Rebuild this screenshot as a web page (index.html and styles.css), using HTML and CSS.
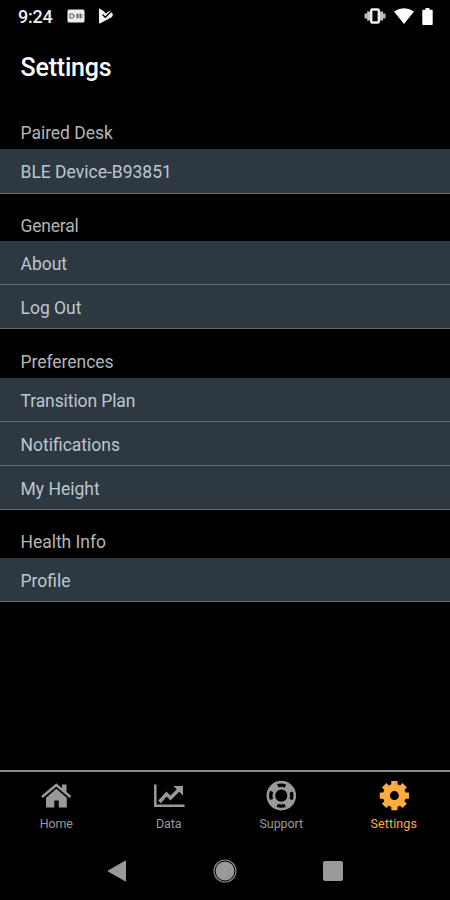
FILE: index.html
```html
<!DOCTYPE html>
<html lang="en">
<head>
<meta charset="utf-8">
<title>Settings</title>
<link rel="stylesheet" href="styles.css">
</head>
<body>
<div class="screen">
  <header class="status">
    <span class="clock">9:24</span>
    <svg class="card" width="18" height="14" viewBox="0 0 18 14"><rect x=".5" y=".5" width="17" height="13" rx="1.5" fill="#eee"/><g fill="none" stroke="#666" stroke-width="1.1"><path d="M3 5h2.500l2 2-2 2H3zM10.500 4.500v5M13.500 4.500v5M9 6h6.500M9 8h6.500"/></g></svg>
    <svg class="play" width="16" height="16" viewBox="0 0 16 16"><path d="M1 .3 5.500 3 8 5.500 12 2.500 15 6.500 14 9 2 15.500 1 15z" fill="#f2f2f2"/><path d="m4.500 6.500 2.800 2.800 6-6" fill="none" stroke="#000" stroke-width="1.300"/></svg>
    <div class="system">
      <svg width="22" height="18" viewBox="0 0 22 18"><rect x="7.200" y="2.500" width="7.600" height="13" rx="1" fill="none" stroke="#eee" stroke-width="2.400"/><path d="M4.500 4.500v9M17.500 4.500v9" stroke="#ccc" stroke-width="2.800"/><path d="M1.800 6.500v5M20.200 6.500v5" stroke="#bbb" stroke-width="2.600"/></svg>
      <svg class="wifi" width="20" height="16" viewBox="0 0 20 16"><path d="M0 3.500Q10-3 20 3.500L10 16z" fill="#fff"/></svg>
      <svg class="battery" width="11" height="17" viewBox="0 0 11 17"><path d="M3.500 0h4v1.700H10q.700 0 .700.700V16q0 1-.7 1H1q-.7 0-.7-1V2.400q0-.7.7-.7h2.500z" fill="#fff"/></svg>
    </div>
  </header>
  <h1 class="title">Settings</h1>
  <main class="content">
    <section class="paired"><h2>Paired Desk</h2><ul><li>BLE Device-B93851</li></ul></section>
    <section class="general"><h2>General</h2><ul><li>About</li><li>Log Out</li></ul></section>
    <section class="preferences"><h2>Preferences</h2><ul><li class="plan">Transition Plan</li><li>Notifications</li><li>My Height</li></ul></section>
    <section class="health"><h2>Health Info</h2><ul><li>Profile</li></ul></section>
  </main>
  <nav class="tabs">
    <a class="tab"><svg width="32" height="32" viewBox="0 0 32 32" fill="#999"><path d="M16.300 8.800 26.800 17.700v9.800h-8v-7h-4.500v7h-8.300V17.700z"/><path d="m2 17 14.300-12 14.200 12" fill="none" stroke="#000" stroke-width="4.200"/><path d="M22 4.500h4.500v9.500L22 10z"/><path d="m2 17 14.300-12 14.200 12" fill="none" stroke="#999" stroke-width="2.500"/></svg><span>Home</span></a>
    <a class="tab"><svg width="32" height="32" viewBox="0 0 32 32" fill="none" stroke="#999"><path d="M2.300 4.500v21.200H31.500" stroke-width="2.500"/><path d="m6.500 22 7-8 4 4L27 8.500" stroke-width="3.500"/><path d="M20.500 6H30v9.500z" fill="#999" stroke="none"/></svg><span>Data</span></a>
    <a class="tab"><svg width="32" height="32" viewBox="0 0 32 32" fill="none" stroke="#999"><circle cx="16.300" cy="15.600" r="13.500" stroke-width="2.600"/><circle cx="16.300" cy="15.600" r="7.500" stroke-width="2.800"/><circle cx="16.300" cy="15.600" r="10.500" stroke-width="5" stroke-dasharray="8.500 7.993" stroke-dashoffset="-3.997"/></svg><span>Support</span></a>
    <a class="tab active"><svg width="32" height="32" viewBox="0 0 32 32"><g transform="translate(.4 -.4)"><circle cx="16" cy="16" r="8" fill="none" stroke="#ffad42" stroke-width="7"/><path stroke="#ffad42" stroke-width="6.200" d="M16 1.400v6M16 24.600v6M1.400 16h6M24.600 16h6M5.700 5.700l4.300 4.300M22 22l4.300 4.300M5.700 26.300 10 22M22 10l4.300-4.300"/></g></svg><span>Settings</span></a>
  </nav>
  <footer class="system-nav">
    <svg width="20" height="22" viewBox="0 0 20 22"><path d="M1 11 18.500 1v20z" fill="#999" stroke="#999" stroke-linejoin="round"/></svg>
    <svg width="24" height="24" viewBox="0 0 24 24"><circle cx="12" cy="12" r="9.400" fill="#999"/><circle cx="12" cy="12" r="11" fill="none" stroke="#888" stroke-width="1.200"/></svg>
    <svg width="22" height="22" viewBox="0 0 22 22"><rect x="1" y="1" width="20" height="20" rx="2" fill="#999"/></svg>
  </footer>
</div>
</body>
</html>
```
FILE: styles.css
```css
* { box-sizing: border-box; }
body { margin: 0; background: #000; font-family: Roboto, sans-serif; }
.screen { width: 450px; height: 900px; display: flex; flex-direction: column; background: #000; overflow: hidden; }
.status { height: 32px; display: flex; align-items: center; padding: 0 17px 0 18px; }
.clock { color: #eee; font-size: 18px; font-weight: 500; letter-spacing: -.2px; line-height: 33px; width: 49px; }
.play { margin-left: 13px; }
.system { margin-left: auto; display: flex; align-items: center; }
.wifi { margin-left: 8px; }
.battery { margin-left: 8px; }
.title { margin: 0; padding-left: 20.500px; height: 72px; line-height: 71px; color: #fff; font-size: 25px; font-weight: 500; letter-spacing: -.2px; }
.content { flex: 1; }
h2 { margin: 0; padding: 0 20.500px 5px; display: flex; align-items: flex-end; color: #b5b5b5; font-size: 17.500px; font-weight: 400; line-height: 22px; letter-spacing: -.03px; }
.paired h2 { height: 45px; }
.general h2 { height: 47px; padding-bottom: 4px; letter-spacing: -.2px; }
.preferences h2 { height: 49px; }
.health h2 { height: 48px; }
ul { list-style: none; margin: 0; padding: 0; }
li { height: 44px; padding: 0 20.500px; line-height: 46px; font-size: 17.500px; color: #bdc6d0; background: #2e3841; border-bottom: 1.500px solid #6a6d70; }
.plan { letter-spacing: -.1px; }
.paired li { height: 45px; line-height: 47px; }
.general li { line-height: 47px; }
.tabs { height: 70px; border-top: 2px solid #8b8b8b; display: grid; grid-template-columns: repeat(4, 1fr); color: #999; }
.tab { display: flex; flex-direction: column; align-items: center; padding-top: 8px; font-size: 12.500px; line-height: 16px; letter-spacing: -.1px; }
.tab svg { display: block; margin-bottom: 4px; }
.active { color: #ffad42; letter-spacing: .1px; }
.system-nav { height: 60px; display: flex; align-items: center; padding: 1px 106px 0 107px; justify-content: space-between; }
```
